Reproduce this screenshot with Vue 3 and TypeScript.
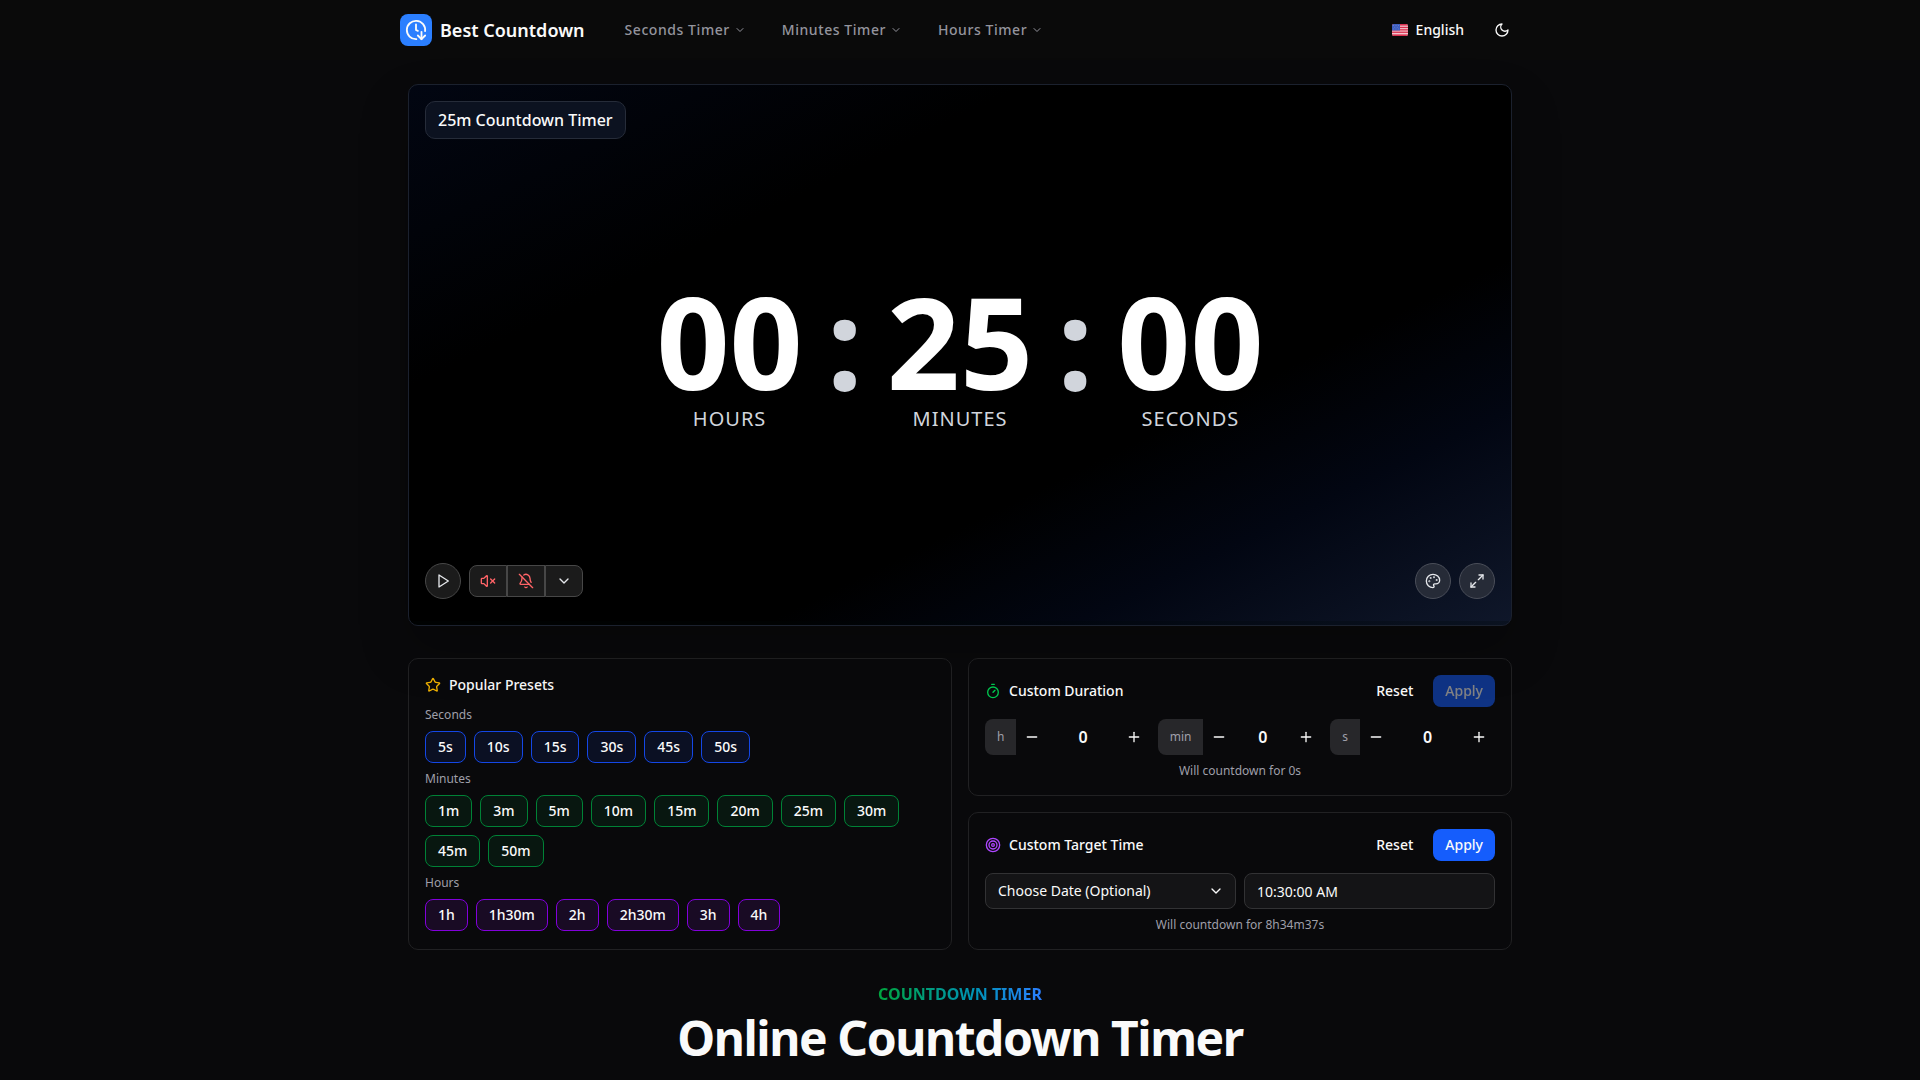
<script setup lang="ts">
import { computed, onUnmounted, ref } from 'vue'

interface PresetGroup {
  label: string
  tone: 'blue' | 'green' | 'purple'
  items: string[]
}

interface DurationField {
  id: string
  unit: string
  name: string
  value: number
  max: number
}

const menus = ['Seconds Timer', 'Minutes Timer', 'Hours Timer']

const presetGroups: PresetGroup[] = [
  { label: 'Seconds', tone: 'blue', items: ['5s', '10s', '15s', '30s', '45s', '50s'] },
  {
    label: 'Minutes',
    tone: 'green',
    items: ['1m', '3m', '5m', '10m', '15m', '20m', '25m', '30m', '45m', '50m'],
  },
  { label: 'Hours', tone: 'purple', items: ['1h', '1h30m', '2h', '2h30m', '3h', '4h'] },
]

const title = ref('25m')
const remaining = ref(25 * 60)
const running = ref(false)
const targetDate = ref('')
const targetTime = ref('10:30:00 AM')

const fields = ref<DurationField[]>([
  { id: 'duration-h', unit: 'h', name: 'Hours', value: 0, max: 99 },
  { id: 'duration-m', unit: 'min', name: 'Minutes', value: 0, max: 59 },
  { id: 'duration-s', unit: 's', name: 'Seconds', value: 0, max: 59 },
])

const pad = (n: number): string => String(n).padStart(2, '0')

const units = computed(() => [
  { label: 'HOURS', value: pad(Math.floor(remaining.value / 3600)) },
  { label: 'MINUTES', value: pad(Math.floor(remaining.value / 60) % 60) },
  { label: 'SECONDS', value: pad(remaining.value % 60) },
])

const customSeconds = computed(
  () => fields.value[0].value * 3600 + fields.value[1].value * 60 + fields.value[2].value,
)

function format(total: number): string {
  const h = Math.floor(total / 3600)
  const m = Math.floor(total / 60) % 60
  const s = total % 60
  const text = (h ? `${h}h` : '') + (m ? `${m}m` : '') + (s ? `${s}s` : '')
  return text || '0s'
}

function parse(text: string): number {
  const part = (unit: string) => Number(text.match(new RegExp(`(\\d+)${unit}`))?.[1] ?? 0)
  return part('h') * 3600 + part('m') * 60 + part('s')
}

function start(total: number): void {
  running.value = false
  remaining.value = total
  title.value = format(total)
}

function step(field: DurationField, delta: number): void {
  field.value = Math.min(field.max, Math.max(0, Number(field.value) + delta))
}

function resetDuration(): void {
  fields.value.forEach((f) => (f.value = 0))
}

const tick = window.setInterval(() => {
  if (running.value && remaining.value > 0) remaining.value -= 1
}, 1000)
onUnmounted(() => window.clearInterval(tick))
</script>

<template>
  <div class="page">
    <header class="header">
      <div class="header-inner">
        <a href="#" class="brand">
          <span class="logo">
            <svg class="icon" width="22" height="22" viewBox="0 0 24 24" aria-hidden="true">
              <path d="M12.338 21.994A10 10 0 1 1 21.925 13.227" />
              <path d="M12 6v6l2 1" />
              <path d="m14 18 4 4 4-4" />
              <path d="M18 14v8" />
            </svg>
          </span>
          Best Countdown
        </a>
        <nav class="nav">
          <button v-for="menu in menus" :key="menu" type="button" class="nav-item">
            {{ menu }}
            <svg class="icon" width="12" height="12" viewBox="0 0 24 24" aria-hidden="true">
              <path d="m6 9 6 6 6-6" />
            </svg>
          </button>
        </nav>
        <div class="header-tools">
          <button type="button" class="language">
            <svg class="flag" width="16" height="12" viewBox="0 0 16 12" aria-hidden="true">
              <rect width="16" height="12" fill="#f5c6cf" />
              <g fill="#d9304f">
                <rect width="16" height="1.6" />
                <rect y="2.8" width="16" height="1.3" />
                <rect y="5.2" width="16" height="1.3" />
                <rect y="7.6" width="16" height="1.3" />
                <rect y="10.4" width="16" height="1.6" />
              </g>
              <rect width="8" height="6.5" fill="#3f5fc0" />
              <g fill="#8ea2e0">
                <circle cx="1.6" cy="1.5" r="0.4" />
                <circle cx="4" cy="1.5" r="0.4" />
                <circle cx="6.4" cy="1.5" r="0.4" />
                <circle cx="2.8" cy="3.2" r="0.4" />
                <circle cx="5.2" cy="3.2" r="0.4" />
                <circle cx="1.6" cy="4.9" r="0.4" />
                <circle cx="4" cy="4.9" r="0.4" />
                <circle cx="6.4" cy="4.9" r="0.4" />
              </g>
            </svg>
            English
          </button>
          <button type="button" class="theme" aria-label="Toggle theme">
            <svg class="icon" width="16" height="16" viewBox="0 0 24 24" aria-hidden="true">
              <path d="M12 3a6 6 0 0 0 9 9 9 9 0 1 1-9-9Z" />
            </svg>
          </button>
        </div>
      </div>
    </header>

    <main class="main">
      <section class="timer">
        <div class="badge">{{ title }} Countdown Timer</div>
        <div class="clock">
          <template v-for="(unit, i) in units" :key="unit.label">
            <span v-if="i > 0" class="colon">:</span>
            <div class="unit">
              <span class="digits">{{ unit.value }}</span>
              <span class="unit-label">{{ unit.label }}</span>
            </div>
          </template>
        </div>
        <div class="controls">
          <div class="controls-side">
            <button type="button" class="round" aria-label="Start" @click="running = !running">
              <svg class="icon" width="16" height="16" viewBox="0 0 24 24" aria-hidden="true">
                <path d="M6 3 20 12 6 21Z" />
              </svg>
            </button>
            <div class="group">
              <button type="button" class="group-item off" aria-label="Sound off">
                <svg class="icon" width="16" height="16" viewBox="0 0 24 24" aria-hidden="true">
                  <path
                    d="M11 4.702a.705.705 0 0 0-1.203-.498L6.413 7.587A1.4 1.4 0 0 1 5.416 8H3a1 1 0 0 0-1 1v6a1 1 0 0 0 1 1h2.416a1.4 1.4 0 0 1 .997.413l3.383 3.384A.705.705 0 0 0 11 19.298z"
                  />
                  <path d="m22 9-6 6" />
                  <path d="m16 9 6 6" />
                </svg>
              </button>
              <button type="button" class="group-item off" aria-label="Notifications off">
                <svg class="icon" width="16" height="16" viewBox="0 0 24 24" aria-hidden="true">
                  <path d="M10.268 21a2 2 0 0 0 3.464 0" />
                  <path
                    d="M17 17H4a1 1 0 0 1-.74-1.673C4.59 13.956 6 12.499 6 8a6 6 0 0 1 .258-1.742"
                  />
                  <path d="m2 2 20 20" />
                  <path d="M8.668 3.01A6 6 0 0 1 18 8c0 2.687.77 4.653 1.707 6.05" />
                </svg>
              </button>
              <button type="button" class="group-item" aria-label="More options">
                <svg class="icon" width="16" height="16" viewBox="0 0 24 24" aria-hidden="true">
                  <path d="m6 9 6 6 6-6" />
                </svg>
              </button>
            </div>
          </div>
          <div class="controls-side">
            <button type="button" class="round light" aria-label="Theme colours">
              <svg class="icon" width="16" height="16" viewBox="0 0 24 24" aria-hidden="true">
                <circle cx="13.5" cy="6.5" r=".5" />
                <circle cx="17.5" cy="10.5" r=".5" />
                <circle cx="8.5" cy="7.5" r=".5" />
                <circle cx="6.5" cy="12.5" r=".5" />
                <path
                  d="M12 2C6.5 2 2 6.5 2 12s4.5 10 10 10c.926 0 1.648-.746 1.648-1.688 0-.437-.18-.835-.437-1.125-.29-.289-.438-.652-.438-1.125a1.64 1.64 0 0 1 1.668-1.668h1.996c3.051 0 5.555-2.503 5.555-5.554C21.965 6.012 17.461 2 12 2z"
                />
              </svg>
            </button>
            <button type="button" class="round light" aria-label="Full screen">
              <svg class="icon" width="16" height="16" viewBox="0 0 24 24" aria-hidden="true">
                <path d="M15 3h6v6" />
                <path d="m21 3-7 7" />
                <path d="m3 21 7-7" />
                <path d="M9 21H3v-6" />
              </svg>
            </button>
          </div>
        </div>
        <div class="progress"></div>
      </section>

      <div class="panels">
        <section class="panel">
          <h2 class="panel-title">
            <svg class="icon star" width="16" height="16" viewBox="0 0 24 24" aria-hidden="true">
              <path
                d="M11.525 2.295a.53.53 0 0 1 .95 0l2.31 4.679a2.123 2.123 0 0 0 1.595 1.16l5.166.756a.53.53 0 0 1 .294.904l-3.736 3.638a2.123 2.123 0 0 0-.611 1.878l.882 5.14a.53.53 0 0 1-.771.56l-4.618-2.428a2.122 2.122 0 0 0-1.973 0L6.396 21.01a.53.53 0 0 1-.77-.56l.881-5.139a2.122 2.122 0 0 0-.611-1.879L2.16 9.795a.53.53 0 0 1 .294-.906l5.165-.755a2.122 2.122 0 0 0 1.597-1.16z"
              />
            </svg>
            Popular Presets
          </h2>
          <div class="preset-groups">
            <div v-for="group in presetGroups" :key="group.label" class="preset-group">
              <h3 class="caption">{{ group.label }}</h3>
              <div class="presets">
                <button
                  v-for="item in group.items"
                  :key="item"
                  type="button"
                  class="preset"
                  :class="group.tone"
                  @click="start(parse(item))"
                >
                  {{ item }}
                </button>
              </div>
            </div>
          </div>
        </section>

        <div class="column">
          <section class="panel">
            <div class="panel-head">
              <h2 class="panel-title">
                <svg class="icon green-icon" width="16" height="16" viewBox="0 0 24 24" aria-hidden="true">
                  <path d="M10 2h4" />
                  <path d="m12 14 3-3" />
                  <circle cx="12" cy="14" r="8" />
                </svg>
                Custom Duration
              </h2>
              <div class="actions">
                <button type="button" class="btn" @click="resetDuration">Reset</button>
                <button
                  type="button"
                  class="btn primary"
                  :disabled="customSeconds === 0"
                  @click="start(customSeconds)"
                >
                  Apply
                </button>
              </div>
            </div>
            <div class="row">
              <div v-for="field in fields" :key="field.id" class="stepper">
                <label class="stepper-unit" :for="field.id">{{ field.unit }}</label>
                <button
                  type="button"
                  class="step"
                  :aria-label="`Decrease ${field.name}`"
                  @click="step(field, -1)"
                >
                  <svg class="icon" width="16" height="16" viewBox="0 0 24 24" aria-hidden="true">
                    <path d="M5 12h14" />
                  </svg>
                </button>
                <input
                  :id="field.id"
                  v-model.number="field.value"
                  class="stepper-input"
                  type="text"
                  inputmode="numeric"
                />
                <button
                  type="button"
                  class="step"
                  :aria-label="`Increase ${field.name}`"
                  @click="step(field, 1)"
                >
                  <svg class="icon" width="16" height="16" viewBox="0 0 24 24" aria-hidden="true">
                    <path d="M5 12h14" />
                    <path d="M12 5v14" />
                  </svg>
                </button>
              </div>
            </div>
            <p class="caption hint">Will countdown for {{ format(customSeconds) }}</p>
          </section>

          <section class="panel">
            <div class="panel-head">
              <h2 class="panel-title">
                <svg class="icon purple-icon" width="16" height="16" viewBox="0 0 24 24" aria-hidden="true">
                  <circle cx="12" cy="12" r="10" />
                  <circle cx="12" cy="12" r="6" />
                  <circle cx="12" cy="12" r="2" />
                </svg>
                Custom Target Time
              </h2>
              <div class="actions">
                <button type="button" class="btn" @click="targetDate = ''">Reset</button>
                <button type="button" class="btn primary">Apply</button>
              </div>
            </div>
            <div class="row">
              <div class="select-wrap">
                <select v-model="targetDate" class="field" aria-label="Target date">
                  <option value="">Choose Date (Optional)</option>
                  <option value="today">Today</option>
                  <option value="tomorrow">Tomorrow</option>
                </select>
                <svg class="icon chevron" width="16" height="16" viewBox="0 0 24 24" aria-hidden="true">
                  <path d="m6 9 6 6 6-6" />
                </svg>
              </div>
              <input v-model="targetTime" class="field" type="text" aria-label="Target time" />
            </div>
            <p class="caption hint">Will countdown for 8h34m37s</p>
          </section>
        </div>
      </div>

      <section class="intro">
        <p class="eyebrow">COUNTDOWN TIMER</p>
        <h1 class="headline">Online Countdown Timer</h1>
      </section>
    </main>
  </div>
</template>

<style>
body {
  background: #09090b;
}
html {
  scrollbar-width: none;
}
</style>

<style scoped>
.page {
  color: #fafafa;
  font-family: 'Noto Sans', 'Liberation Sans', sans-serif;
  font-size: 14px;
  line-height: 20px;
}
.page *,
.page *::before {
  box-sizing: border-box;
}
h1,
h2,
h3,
p {
  margin: 0;
}
button,
input,
select {
  margin: 0;
  padding: 0;
  border: 0;
  background: none;
  color: inherit;
  font: inherit;
}
button {
  cursor: pointer;
}
.icon {
  display: block;
  flex: none;
  fill: none;
  stroke: currentColor;
  stroke-width: 2;
  stroke-linecap: round;
  stroke-linejoin: round;
}

/* Header */
.header {
  background: #0a0a0a;
}
.header-inner {
  display: flex;
  align-items: center;
  max-width: 1152px;
  height: 60px;
  margin: 0 auto;
  padding: 0 16px;
}
.brand {
  display: flex;
  align-items: center;
  gap: 8px;
  color: inherit;
  font-size: 18px;
  font-weight: 600;
  line-height: 28px;
  text-decoration: none;
}
.logo {
  display: grid;
  place-items: center;
  width: 32px;
  height: 32px;
  border-radius: 8px;
  background: #2b7fff;
}
.nav {
  display: flex;
  gap: 4px;
  margin-left: 24px;
}
.nav-item {
  display: flex;
  align-items: center;
  gap: 4px;
  padding: 8px 16px;
  color: #94949d;
  font-weight: 500;
  letter-spacing: 0.04em;
}
.header-tools {
  display: flex;
  align-items: center;
  gap: 8px;
  margin-left: auto;
}
.language {
  display: flex;
  align-items: center;
  gap: 8px;
  padding: 6px 12px;
  font-weight: 500;
}
.flag {
  border-radius: 2px;
}
.theme {
  padding: 8px 10px;
}

/* Timer */
.main {
  max-width: 1152px;
  margin: 0 auto;
  padding: 24px;
  box-sizing: border-box;
}
.timer {
  position: relative;
  display: grid;
  grid-template-rows: 1fr auto 1fr;
  min-height: calc(50vh + 2px);
  padding: 16px;
  overflow: hidden;
  border: 1px solid #1b212e;
  border-radius: 10px;
  background: linear-gradient(
    to bottom right,
    #020612 0%,
    #000 28%,
    #000 66%,
    #020612 80%,
    #0f172a 100%
  );
  box-shadow: 0 24px 48px rgba(0, 0, 0, 0.25);
}
.badge {
  align-self: start;
  justify-self: start;
  padding: 6px 12px;
  border: 1px solid #262c39;
  border-radius: 10px;
  background: #0c1220;
  font-size: 16px;
  font-weight: 500;
  line-height: 24px;
}
.clock {
  display: flex;
  justify-content: center;
  gap: 24px;
}
.unit {
  display: flex;
  flex-direction: column;
  align-items: center;
}
.digits,
.colon {
  font-size: 128px;
  font-weight: 700;
  line-height: 128px;
}
.digits {
  color: #fff;
}
.colon {
  color: #d1d5dc;
}
.unit-label {
  color: #d1d5dc;
  font-size: 20px;
  line-height: 28px;
  letter-spacing: 1px;
}
.controls {
  display: flex;
  align-self: end;
  justify-content: space-between;
  margin-bottom: 10px;
}
.controls-side {
  display: flex;
  align-items: center;
  gap: 8px;
}
.round {
  display: grid;
  place-items: center;
  width: 36px;
  height: 36px;
  border: 1px solid #474747;
  border-radius: 50%;
  background: #1b1b1b;
  color: #e5e7eb;
}
.round.light {
  border-color: #4a4e59;
  background: #262b37;
}
.group {
  display: flex;
}
.group-item {
  display: grid;
  place-items: center;
  width: 38px;
  height: 32px;
  border: 1px solid #474747;
  background: #1b1b1b;
  color: #e5e7eb;
}
.group-item:first-child {
  border-radius: 8px 0 0 8px;
}
.group-item:last-child {
  border-radius: 0 8px 8px 0;
}
.group-item.off {
  color: #ff6467;
}
.progress {
  position: absolute;
  right: 0;
  bottom: 0;
  left: 0;
  height: 4px;
  background: rgba(0, 8, 8, 0.25);
}

/* Panels */
.panels {
  display: grid;
  grid-template-columns: repeat(2, minmax(0, 1fr));
  gap: 16px;
  margin-top: 32px;
}
.column {
  display: flex;
  flex-direction: column;
  gap: 16px;
}
.panel {
  padding: 16px;
  border: 1px solid #212123;
  border-radius: 10px;
  background: #09090b;
}
.panel-head {
  display: flex;
  align-items: center;
  justify-content: space-between;
}
.panel-title {
  display: flex;
  align-items: center;
  gap: 8px;
  font-size: 14px;
  font-weight: 500;
  line-height: 20px;
}
.star {
  color: #f0b100;
}
.green-icon {
  color: #00c950;
}
.purple-icon {
  color: #ad46ff;
}
.preset-groups {
  display: flex;
  flex-direction: column;
  gap: 8px;
  margin-top: 12px;
}
.caption {
  color: #9f9fa9;
  font-size: 12px;
  font-weight: 400;
  line-height: 16px;
}
.presets {
  display: flex;
  flex-wrap: wrap;
  gap: 8px;
  margin-top: 8px;
}
.preset {
  height: 32px;
  padding: 0 12px;
  border: 1px solid;
  border-radius: 8px;
  font-weight: 500;
}
.preset.blue {
  border-color: #1447e6;
  background: #0b1023;
}
.preset.green {
  border-color: #008236;
  background: #081710;
}
.preset.purple {
  border-color: #8200db;
  background: #190b24;
}
.actions {
  display: flex;
  gap: 8px;
}
.btn {
  height: 32px;
  padding: 0 12px;
  border-radius: 8px;
  font-weight: 500;
}
.btn.primary {
  background: #155dfc;
}
.btn:disabled {
  opacity: 0.5;
  cursor: default;
}
.row {
  display: grid;
  grid-auto-columns: minmax(0, 1fr);
  grid-auto-flow: column;
  gap: 8px;
  margin-top: 12px;
}
.stepper {
  display: flex;
  height: 36px;
}
.stepper-unit {
  display: grid;
  place-items: center;
  padding: 0 12px;
  border-radius: 8px 0 0 8px;
  background: #27272a;
  color: #9f9fa9;
  font-size: 12px;
  line-height: 16px;
}
.step {
  display: grid;
  flex: none;
  place-items: center;
  width: 32px;
}
.stepper-input {
  flex: 1;
  width: 0;
  min-width: 0;
  font-size: 16px;
  font-weight: 600;
  text-align: center;
}
.select-wrap {
  position: relative;
}
.field {
  display: block;
  width: 100%;
  height: 36px;
  padding: 0 12px;
  border: 1px solid #323234;
  border-radius: 8px;
  background: #141416;
  appearance: none;
}
.chevron {
  position: absolute;
  top: 10px;
  right: 12px;
  pointer-events: none;
}
.hint {
  margin-top: 8px;
  text-align: center;
}

/* Intro */
.intro {
  display: flex;
  flex-direction: column;
  align-items: center;
  gap: 8px;
  margin-top: 32px;
}
.eyebrow {
  background: linear-gradient(to right, #00a63e, #0092b8 60%, #2b7fff);
  background-clip: text;
  color: transparent;
  font-size: 16px;
  font-weight: 700;
  line-height: 24px;
}
.headline {
  font-size: 48px;
  font-weight: 700;
  line-height: 48px;
  letter-spacing: -0.03em;
}
</style>
